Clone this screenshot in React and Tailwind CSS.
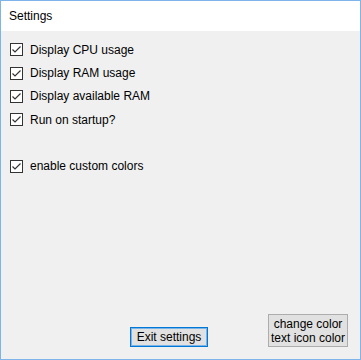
import React from 'react';

const Check = () => (
  <span className="flex h-[13px] w-[13px] shrink-0 items-center justify-center border border-[#333333] bg-white">
    <svg width="11" height="11" viewBox="0 0 11 11" fill="none">
      <path d="M1.5 5.5 L4 8 L9.5 2.5" stroke="#333333" strokeWidth="1.2" />
    </svg>
  </span>
);

const Option = ({ label }) => (
  <label className="flex h-[23.4px] items-center gap-[7px] pl-[9px]">
    <Check />
    <span>{label}</span>
  </label>
);

const App = () => {
  return (
    <div
      className="flex h-[360px] w-[361px] flex-col border border-[#7eb4ea] text-[12px] text-black"
      style={{ fontFamily: '"Liberation Sans", Arial, sans-serif' }}
    >
      <div className="flex h-[30px] shrink-0 items-center bg-white pl-[8px] text-[12px]">Settings</div>
      <div className="flex flex-1 flex-col bg-[#f0f0f0]">
        <div className="flex flex-col pt-[7px]">
          <Option label="Display CPU usage" />
          <Option label="Display RAM usage" />
          <Option label="Display available RAM" />
          <Option label="Run on startup?" />
        </div>
        <div className="flex flex-col pt-[23px]">
          <Option label="enable custom colors" />
        </div>
        <div className="mt-auto flex items-end justify-end gap-[60px] pb-[12px] pr-[12px]">
          <button className="h-[20px] w-[78px] border border-[#0078d7] bg-[#e1e1e1] leading-none shadow-[inset_0_0_0_1px_#7ab3e6]">
            Exit settings
          </button>
          <button className="flex h-[33px] w-[80px] flex-col items-center justify-center border border-[#adadad] bg-[#e1e1e1] leading-[14px]">
            <span>change color</span>
            <span>text icon color</span>
          </button>
        </div>
      </div>
    </div>
  );
};

export default App;
